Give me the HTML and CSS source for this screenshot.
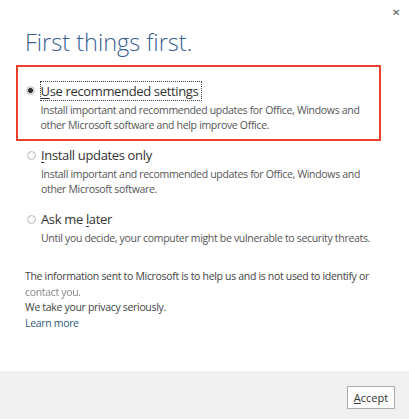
FILE: index.html
```html
<!DOCTYPE html>
<html lang="en">
<head>
  <meta charset="UTF-8">
  <title>First things first</title>
  <link rel="stylesheet" href="styles.css">
</head>
<body>
  <div class="dialog">
    <div class="top-bar">
      <span class="close">&#x2715;</span>
    </div>

    <div class="content">
      <h1 class="title">First things first.</h1>

      <div class="option highlight">
        <div class="option-head">
          <span class="radio checked"></span>
          <span class="label focused"><u>U</u>se recommended settings</span>
        </div>
        <p class="desc">Install important and recommended updates for Office, Windows and<br>other Microsoft software and help improve Office.</p>
      </div>

      <div class="option">
        <div class="option-head">
          <span class="radio"></span>
          <span class="label"><u>I</u>nstall updates only</span>
        </div>
        <p class="desc">Install important and recommended updates for Office, Windows and<br>other Microsoft software.</p>
      </div>

      <div class="option">
        <div class="option-head">
          <span class="radio"></span>
          <span class="label">Ask me <u>l</u>ater</span>
        </div>
        <p class="desc">Until you decide, your computer might be vulnerable to security threats.</p>
      </div>

      <div class="info">
        <p>The information sent to Microsoft is to help us and is not used to identify or<br><span class="smudge">contact you.</span></p>
        <p>We take your privacy seriously.</p>
        <a class="learn" href="#">Learn more</a>
      </div>
    </div>

    <div class="footer">
      <button class="accept"><u>A</u>ccept</button>
    </div>
  </div>
</body>
</html>
```

FILE: styles.css
```css
/* Office first run dialog */
* {
  box-sizing: border-box;
}

body {
  margin: 0;
  background: #fff;
  font-family: 'Open Sans', 'Noto Sans', sans-serif;
}

.dialog {
  width: 409px;
  height: 419px;
  display: flex;
  flex-direction: column;
  background: #fff;
  overflow: hidden;
}

.top-bar {
  height: 24px;
  display: flex;
  justify-content: flex-end;
  align-items: center;
  padding-right: 9px;
  flex-shrink: 0;
}

.close {
  font-size: 10px;
  color: #555;
  line-height: 1;
}

.content {
  flex: 1;
  padding: 0 28px 0 16px;
  white-space: nowrap;
}

.title {
  margin: 0 0 9px 0;
  padding: 4px 0 0 9px;
  font-size: 23.5px;
  font-weight: 300;
  line-height: 28px;
  color: #3a5f91;
  letter-spacing: 0;
}

.option {
  padding-left: 10.5px;
  margin-bottom: 12px;
}

.option.highlight {
  border: 2.5px solid #e5412d;
  padding: 13.5px 0 6.5px 8px;
  margin-bottom: 4px;
}

.option-head {
  display: flex;
  align-items: center;
  height: 20px;
}

.radio {
  width: 9px;
  height: 9px;
  border-radius: 50%;
  border: 1px solid #bdbdbd;
  background: radial-gradient(circle, #fff 0, #f4f4f4 4px);
  margin-right: 5.5px;
  flex-shrink: 0;
}

.radio.checked {
  border-color: #c8c8c8;
  background: radial-gradient(circle, #333 0, #333 2.2px, #dcdcdc 2.8px);
}

.label {
  font-size: 13px;
  color: #333;
  line-height: 18px;
  letter-spacing: -0.35px;
}

.label u {
  text-decoration-thickness: 1px;
  text-underline-offset: 2px;
}

.label.focused {
  outline: 1px dotted #444;
  padding-right: 3px;
}

.desc {
  margin: 2px 0 0 14.5px;
  font-size: 10.5px;
  line-height: 15px;
  color: #555;
  letter-spacing: -0.32px;
}

.info {
  padding: 11px 0 0 9px;
  font-size: 10.5px;
  line-height: 15.6px;
  color: #444;
  letter-spacing: -0.32px;
}

.info p {
  margin: 0;
}

.smudge {
  color: #888;
  filter: blur(0.6px);
}

.learn {
  color: #2f5b7a;
  text-decoration: none;
}

.footer {
  height: 48px;
  flex-shrink: 0;
  background: #f0f0f0;
  display: flex;
  justify-content: flex-end;
  align-items: flex-start;
  padding: 15px 14px 0 0;
}

.accept {
  width: 48px;
  height: 23px;
  padding: 0;
  border: 1px solid #adadad;
  background: #fdfdfd;
  font-family: 'Open Sans', 'Noto Sans', sans-serif;
  font-size: 11px;
  color: #333;
}
```
